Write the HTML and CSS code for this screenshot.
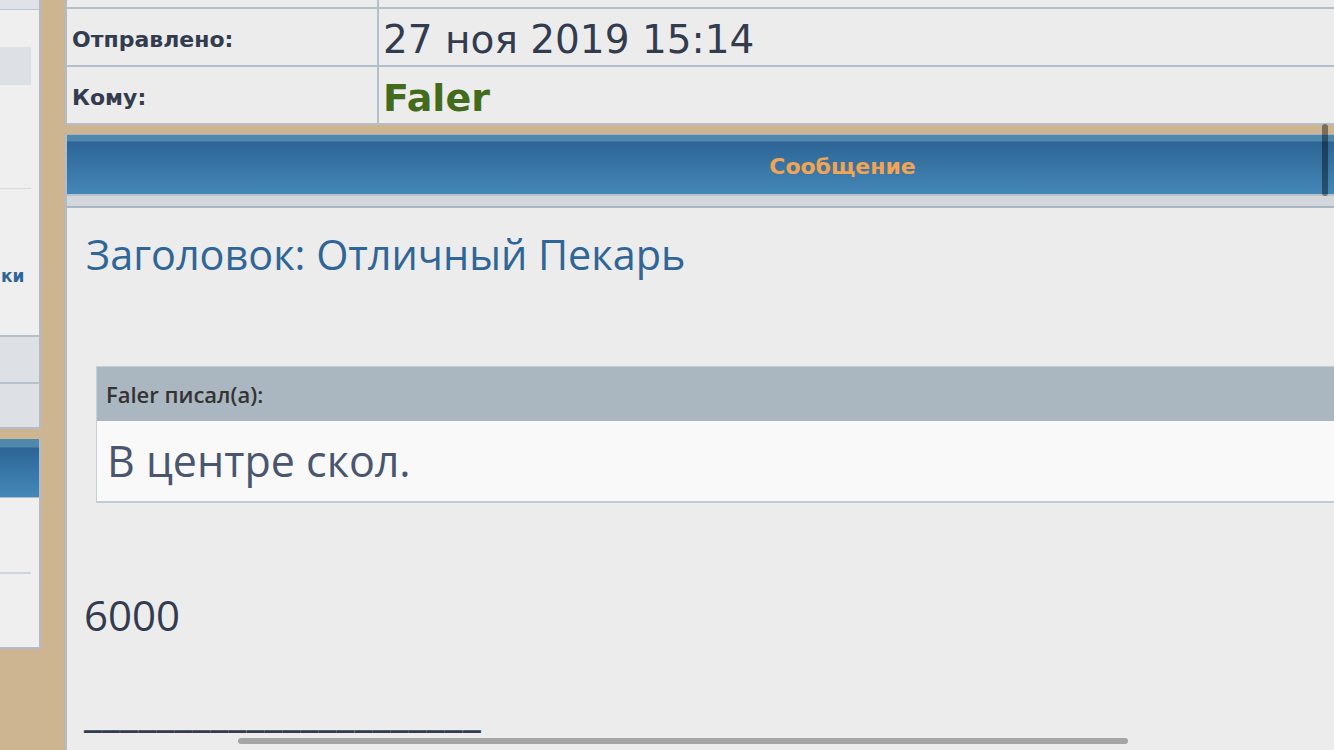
FILE: index.html
```html
<!DOCTYPE html>
<html lang="ru">
<head>
<meta charset="utf-8">
<title>Сообщение</title>
<link rel="stylesheet" href="styles.css">
</head>
<body>
<div class="page">
  <aside class="side">
    <div class="side-box">
      <div class="side-top"></div>
      <div class="side-item"></div>
      <div class="side-sep"></div>
      <div class="side-link">ки</div>
      <div class="side-rows">
        <div class="side-row"></div>
        <div class="side-row"></div>
      </div>
    </div>
    <div class="side-box side-box2">
      <div class="side-head"></div>
      <div class="side-body"><div class="side-sep side-sep2"></div></div>
    </div>
  </aside>
  <main class="main">
    <div class="info">
      <div class="info-row info-row-cut"><div class="info-label"></div><div class="info-value"></div></div>
      <div class="info-row"><div class="info-label">Отправлено:</div><div class="info-value date">27 ноя 2019 15:14</div></div>
      <div class="info-row"><div class="info-label">Кому:</div><div class="info-value"><span class="user">Faler</span></div></div>
    </div>
    <section class="msg">
      <div class="msg-head">Сообщение</div>
      <div class="msg-strip"></div>
      <div class="msg-body">
        <h1 class="msg-title">Заголовок: Отличный Пекарь</h1>
        <blockquote class="quote">
          <div class="quote-head">Faler писал(а):</div>
          <div class="quote-text">В центре скол.</div>
        </blockquote>
        <p class="msg-text">6000</p>
        <p class="msg-sig">______________________</p>
      </div>
    </section>
  </main>
</div>
<div class="scroll-v"></div>
<div class="scroll-h"></div>
</body>
</html>
```
FILE: styles.css
```css
html, body {
  margin: 0;
  padding: 0;
  overflow: hidden;
  height: 100%;
}
body {
  background: #cdb591;
  font-family: "DejaVu Sans", Verdana, sans-serif;
  color: #333c4e;
}
.page {
  display: flex;
  gap: 24px;
  align-items: flex-start;
}

/* sidebar */
.side {
  width: 41px;
  flex-shrink: 0;
  display: flex;
  flex-direction: column;
  gap: 10px;
}
.side-box {
  width: 39px;
  background: #efefef;
  border-right: 2px solid #b0bccb;
  border-bottom: 2px solid #b0bccb;
  display: flex;
  flex-direction: column;
}
.side-top {
  height: 9px;
  background: #dfe3e8;
  border-bottom: 1px solid #bcc5cf;
}
.side-item {
  margin-top: 37px;
  width: 31px;
  height: 38px;
  background: #dde1e6;
}
.side-sep {
  margin-top: 103px;
  width: 31px;
  height: 1px;
  background: #d3d8de;
}
.side-link {
  margin-top: 75px;
  height: 24px;
  line-height: 24px;
  font-size: 17px;
  font-weight: bold;
  color: #2e6596;
  padding-left: 1px;
  white-space: nowrap;
}
.side-rows {
  margin-top: 47px;
  display: flex;
  flex-direction: column;
}
.side-row {
  background: #dde1e6;
  border-top: 2px solid #b7c1cb;
  height: 45px;
}
.side-row + .side-row {
  height: 43px;
}
.side-box2 {
  background: #efefef;
}
.side-head {
  height: 58px;
  background: linear-gradient(#4f87ad 0, #4f87ad 8px, #2c6596 9px, #4488b7 100%);
  border-bottom: 1px solid #b0bccb;
}
.side-body {
  height: 149px;
}
.side-sep2 {
  margin-top: 74px;
  background: #d0d5db;
  height: 2px;
}

/* main */
.main {
  width: 1553px;
  flex-shrink: 0;
  display: flex;
  flex-direction: column;
  gap: 9px;
}
.info {
  background: #ececec;
  border-left: 2px solid #aebccb;
  border-bottom: 2px solid #b4bfca;
}
.info-row {
  display: flex;
  height: 56px;
  border-bottom: 2px solid #b4bfca;
}
.info-row:last-child {
  border-bottom: none;
}
.info-row-cut {
  height: 7px;
}
.info-label {
  width: 312px;
  flex-shrink: 0;
  border-right: 2px solid #b4bfca;
  box-sizing: border-box;
  padding: 18px 0 0 5px;
  font-size: 22px;
  line-height: 26px;
  font-weight: bold;
  color: #333c4e;
}
.info-value {
  padding: 8px 0 0 4px;
  font-size: 39px;
  line-height: 46px;
  color: #333c4e;
  white-space: nowrap;
}
.user {
  font-size: 38px;
  font-weight: bold;
  color: #436b1c;
}

.msg {
  border-left: 2px solid #aebccb;
  border-top: 1px solid #9fb3c6;
  background: #ececec;
}
.msg-head {
  height: 59px;
  box-sizing: border-box;
  padding-top: 19px;
  line-height: 26px;
  font-size: 22px;
  font-weight: bold;
  text-align: center;
  color: #f2a452;
  background: linear-gradient(#4f87ad 0, #4f87ad 6px, #2c6596 7px, #4487b6 100%);
}
.msg-strip {
  height: 10px;
  background: #d3d7dc;
  border-top: 2px solid #b9c1ca;
  border-bottom: 2px solid #a9b5c1;
}
.msg-body {
  padding: 0 0 0 17px;
  height: 560px;
  font-family: "Open Sans", "Noto Sans", sans-serif;
}
.msg-title {
  margin: 22px 0 0 2px;
  font-size: 41.4px;
  line-height: 48px;
  font-weight: normal;
  color: #2f6597;
  white-space: nowrap;
}
.quote {
  margin: 88px 0 0 12px;
  border: 1px solid #c6ced6;
  border-right: none;
  border-bottom: 2px solid #c3ccd4;
}
.quote-head {
  height: 54px;
  line-height: 54px;
  padding-left: 9px;
  background: #aab6c0;
  font-size: 22px;
  font-weight: 600;
  color: #333333;
}
.quote-text {
  height: 80px;
  line-height: 80px;
  padding-left: 10px;
  background: #f9f9f9;
  font-size: 43px;
  color: #4a5670;
}
.msg-text {
  margin: 88px 0 0;
  font-size: 42px;
  line-height: 48px;
  color: #333c4e;
}
.msg-sig {
  margin: 48px 0 0;
  font-size: 42px;
  line-height: 48px;
  letter-spacing: 0.2px;
  font-weight: 600;
  color: #333c4e;
  white-space: nowrap;
}

/* scroll indicators (overlay) */
.scroll-v {
  position: fixed;
  left: 1322px;
  top: 124px;
  width: 6px;
  height: 72px;
  border-radius: 3px;
  background: rgba(0, 0, 0, 0.4);
}
.scroll-h {
  position: fixed;
  left: 238px;
  top: 738px;
  width: 890px;
  height: 6px;
  border-radius: 3px;
  background: rgba(0, 0, 0, 0.3);
}
```
